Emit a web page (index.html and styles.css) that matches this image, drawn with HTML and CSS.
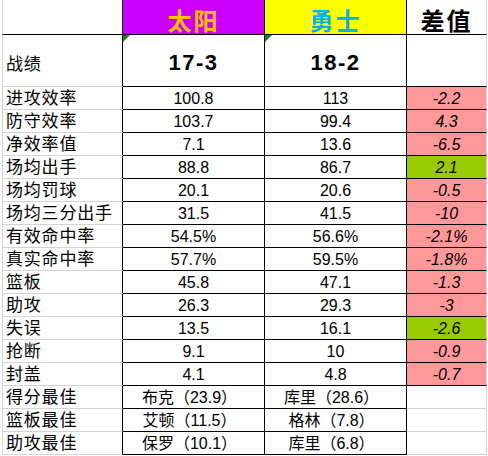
FILE: index.html
```html
<!DOCTYPE html>
<html lang="zh">
<head>
<meta charset="utf-8">
<link rel="stylesheet" href="styles.css">
</head>
<body>
<div class="sheet">
  <div class="cell a hdr"></div>
  <div class="cell b hdr sun">太阳</div>
  <div class="cell c hdr gsw">勇士</div>
  <div class="cell d hdr diff">差值</div>

  <div class="cell a rec">战绩</div>
  <div class="cell b rec num"><span class="flag"></span>17-3</div>
  <div class="cell c rec num"><span class="flag"></span>18-2</div>
  <div class="cell d rec"></div>

  <div class="cell a">进攻效率</div><div class="cell b">100.8</div><div class="cell c">113</div><div class="cell d neg">-2.2</div>
  <div class="cell a">防守效率</div><div class="cell b">103.7</div><div class="cell c">99.4</div><div class="cell d neg">4.3</div>
  <div class="cell a">净效率值</div><div class="cell b">7.1</div><div class="cell c">13.6</div><div class="cell d neg">-6.5</div>
  <div class="cell a">场均出手</div><div class="cell b">88.8</div><div class="cell c">86.7</div><div class="cell d pos">2.1</div>
  <div class="cell a">场均罚球</div><div class="cell b">20.1</div><div class="cell c">20.6</div><div class="cell d neg">-0.5</div>
  <div class="cell a">场均三分出手</div><div class="cell b">31.5</div><div class="cell c">41.5</div><div class="cell d neg">-10</div>
  <div class="cell a">有效命中率</div><div class="cell b">54.5%</div><div class="cell c">56.6%</div><div class="cell d neg">-2.1%</div>
  <div class="cell a">真实命中率</div><div class="cell b">57.7%</div><div class="cell c">59.5%</div><div class="cell d neg">-1.8%</div>
  <div class="cell a">篮板</div><div class="cell b">45.8</div><div class="cell c">47.1</div><div class="cell d neg">-1.3</div>
  <div class="cell a">助攻</div><div class="cell b">26.3</div><div class="cell c">29.3</div><div class="cell d neg">-3</div>
  <div class="cell a">失误</div><div class="cell b">13.5</div><div class="cell c">16.1</div><div class="cell d pos">-2.6</div>
  <div class="cell a">抢断</div><div class="cell b">9.1</div><div class="cell c">10</div><div class="cell d neg">-0.9</div>
  <div class="cell a">封盖</div><div class="cell b">4.1</div><div class="cell c">4.8</div><div class="cell d neg">-0.7</div>
  <div class="cell a">得分最佳</div><div class="cell b best">布克（23.9）</div><div class="cell c best">库里（28.6）</div><div class="cell d empty"></div>
  <div class="cell a">篮板最佳</div><div class="cell b best">艾顿（11.5）</div><div class="cell c best">格林（7.8）</div><div class="cell d empty"></div>
  <div class="cell a">助攻最佳</div><div class="cell b best">保罗（10.1）</div><div class="cell c best">库里（6.8）</div><div class="cell d empty"></div>
</div>
</body>
</html>
```

FILE: styles.css
```css
html, body {
  margin: 0;
  padding: 0;
  background: #ffffff;
}

.sheet {
  display: grid;
  grid-template-columns: 121px 142px 142px 80px;
  grid-template-rows: 35px 52px repeat(16, 23px);
  margin-left: 2px;
  width: 485px;
  font-family: "Liberation Sans", "Noto Sans CJK SC", sans-serif;
  color: #000;
}

.cell {
  position: relative;
  box-sizing: border-box;
  display: flex;
  align-items: flex-end;
  justify-content: center;
  border-right: 1px solid #000;
  border-bottom: 1px solid #000;
  font-size: 16px;
  line-height: 18px;
  padding-bottom: 1px;
  white-space: nowrap;
}

.a {
  justify-content: flex-start;
  border-left: 1px solid #d4d4d4;
  border-bottom-color: #d4d4d4;
  padding-left: 3px;
  font-family: "Noto Sans CJK SC", sans-serif;
  font-size: 17px;
  letter-spacing: 0.8px;
  line-height: 18px;
  padding-bottom: 3px;
}

.hdr {
  border-bottom-color: #000;
  font-family: "Noto Sans CJK SC", sans-serif;
  font-size: 24px;
  font-weight: 700;
  line-height: 28px;
  letter-spacing: 2px;
  padding-bottom: 0;
}

.sun { background: #cc00ff; color: #ffc000; }
.gsw { background: #ffff00; color: #00b0f0; }

.d {
  border-right-color: #d4d4d4;
  font-style: italic;
}

.d.diff {
  color: #000;
  font-style: normal;
}

.rec {
  align-items: center;
  padding-top: 4px;
  padding-bottom: 0;
}

.a.rec {
  padding-top: 5px;
}

.num {
  font-size: 22px;
  font-weight: 700;
  letter-spacing: 1.5px;
}

.flag {
  position: absolute;
  top: 0;
  left: 0;
  width: 0;
  height: 0;
  border-top: 7px solid #1f801f;
  border-right: 7px solid transparent;
}

.neg { background: #ff9999; }
.pos { background: #99cc00; }

.empty {
  border-bottom-color: #d4d4d4;
}

.best {
  padding-right: 8px;
}
```
